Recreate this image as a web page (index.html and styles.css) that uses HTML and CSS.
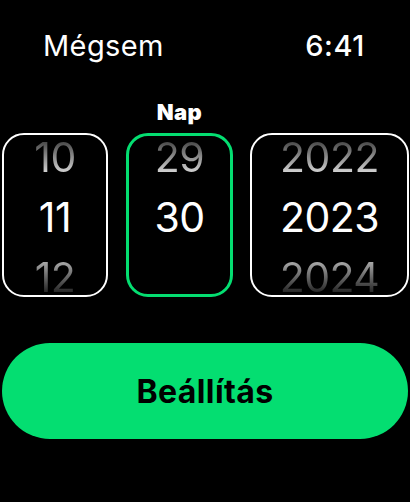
FILE: index.html
```html
<!DOCTYPE html>
<html lang="hu">
<head>
<meta charset="utf-8">
<link rel="stylesheet" href="styles.css">
</head>
<body>
<div class="screen">
  <header class="topbar">
    <span class="cancel">Mégsem</span>
    <span class="clock">6:41</span>
  </header>
  <div class="labels">
    <span class="label label-day">Nap</span>
  </div>
  <div class="pickers">
    <div class="picker picker-month">
      <div class="list">
        <div class="item item-prev">10</div>
        <div class="item item-cur">11</div>
        <div class="item item-next">12</div>
      </div>
    </div>
    <div class="picker picker-day active">
      <div class="list">
        <div class="item item-prev">29</div>
        <div class="item item-cur">30</div>
        <div class="item item-next"></div>
      </div>
    </div>
    <div class="picker picker-year">
      <div class="list">
        <div class="item item-prev">2022</div>
        <div class="item item-cur">2023</div>
        <div class="item item-next">2024</div>
      </div>
    </div>
  </div>
  <button class="set-btn">Beállítás</button>
</div>
</body>
</html>
```

FILE: styles.css
```css
* { box-sizing: border-box; }
html, body {
  margin: 0;
  padding: 0;
  background: #000;
}
body {
  font-family: Inter, Roboto, "Liberation Sans", sans-serif;
  color: #fff;
  width: 410px;
  height: 502px;
  overflow: hidden;
}
.screen {
  display: flex;
  flex-direction: column;
}
.topbar {
  display: flex;
  justify-content: space-between;
  align-items: center;
  padding: 28px 45px 0 43px;
  height: 63px;
  font-size: 29px;
  line-height: 34px;
}
.cancel { font-weight: 400; letter-spacing: 0.4px; }
.clock { font-weight: 500; letter-spacing: 0.6px; }
.labels {
  display: flex;
  padding-left: 126px;
  height: 70px;
  padding-top: 36px;
}
.label {
  width: 107px;
  text-align: center;
  font-size: 22px;
  font-weight: 900;
  line-height: 26px;
  letter-spacing: 0.4px;
}
.pickers {
  display: flex;
  gap: 17px;
  padding-left: 2px;
  height: 164px;
}
.picker {
  height: 164px;
  border: 2px solid #fff;
  border-radius: 22px;
  overflow: hidden;
}
.picker-month { width: 106px; margin-right: 1px; }
.picker-day { width: 107px; }
.picker-year { width: 159px; }
.picker.active { border: 3px solid #04de71; }
.list {
  display: flex;
  flex-direction: column;
  align-items: center;
  margin-top: -8px;
}
.active .list { margin-top: -9px; }
.item {
  height: 60px;
  line-height: 60px;
  font-size: 41px;
  font-weight: 400;
  letter-spacing: -0.5px;
}
.item-prev {
  background: linear-gradient(180deg, #4a4a4a 25%, #d0d0d0 75%);
  -webkit-background-clip: text;
  background-clip: text;
  color: transparent;
}
.item-next {
  background: linear-gradient(180deg, #a8a8a8 25%, #1a1a1a 80%);
  -webkit-background-clip: text;
  background-clip: text;
  color: transparent;
}
.set-btn {
  margin: 46px 0 0 2px;
  width: 406px;
  height: 96px;
  border: none;
  border-radius: 48px;
  background: #04de71;
  color: #000;
  font-family: Inter, Roboto, "Liberation Sans", sans-serif;
  font-size: 32px;
  font-weight: 700;
  letter-spacing: 0.4px;
  padding: 0;
}
```
